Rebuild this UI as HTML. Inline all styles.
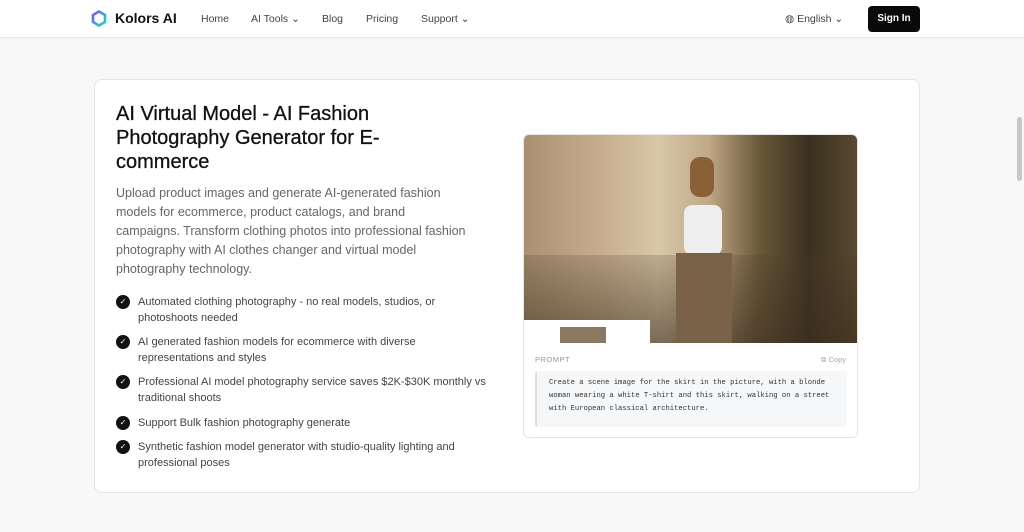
<!DOCTYPE html>
<html><head><meta charset="utf-8"><style>
*{margin:0;padding:0;box-sizing:border-box}
body{width:1024px;height:532px;overflow:hidden;background:#f8f8f8;font-family:"Liberation Sans",sans-serif;position:relative}
.nav{position:absolute;left:0;top:0;width:1024px;height:38px;background:#fff;border-bottom:1px solid #e8e8e8}
.nav span{position:absolute;top:13px;font-size:10.5px;color:#444}
.card{position:absolute;left:94px;top:79px;width:826px;height:414px;background:#fff;border:1px solid #e5e5e5;border-radius:8px}
h1{position:absolute;left:116px;top:102px;width:330px;font-size:20px;line-height:24px;font-weight:500;color:#111;-webkit-text-stroke:.3px #111}
.desc{position:absolute;left:116px;top:184px;width:350px;font-size:12.5px;line-height:19px;color:#666}
.li{position:absolute;left:116px;width:374px;font-size:11px;line-height:16px;color:#444;padding-left:22px}
.li:before{content:"✓";position:absolute;left:0;top:1px;width:14px;height:14px;border-radius:50%;background:#111;color:#fff;font-size:8px;line-height:14px;text-align:center}
.ic{position:absolute;left:523px;top:134px;width:335px;height:304px;border:1px solid #e5e5e5;border-radius:6px;background:#fff;overflow:hidden}
</style></head><body>
<div class="nav">
<svg style="position:absolute;left:91px;top:10px" width="16" height="17" viewBox="0 0 16 17"><defs><linearGradient id="g" x1="0" y1="0" x2="1" y2="1"><stop offset="0" stop-color="#8a4df0"/><stop offset=".5" stop-color="#3aa0f0"/><stop offset="1" stop-color="#33d0a0"/></linearGradient></defs><polygon points="8,1.5 14,5 14,12 8,15.5 2,12 2,5" fill="none" stroke="url(#g)" stroke-width="2.6"/></svg>
<span style="left:115px;top:10px;font-size:14px;font-weight:bold;color:#111">Kolors AI</span>
<span style="left:201px">Home</span>
<span style="left:251px">AI Tools ⌄</span>
<span style="left:322px">Blog</span>
<span style="left:366px">Pricing</span>
<span style="left:421px">Support ⌄</span>
<span style="left:785px">◍ English ⌄</span>
<div style="position:absolute;left:868px;top:6px;width:52px;height:26px;background:#0a0a0a;border-radius:4px;color:#fff;font-size:10px;font-weight:bold;text-align:center;line-height:26px">Sign In</div>
</div>
<div class="card"></div>
<h1>AI Virtual Model - AI Fashion Photography Generator for E-commerce</h1>
<div class="desc">Upload product images and generate AI-generated fashion models for ecommerce, product catalogs, and brand campaigns. Transform clothing photos into professional fashion photography with AI clothes changer and virtual model photography technology.</div>
<div class="li" style="top:294px">Automated clothing photography - no real models, studios, or photoshoots needed</div>
<div class="li" style="top:334px">AI generated fashion models for ecommerce with diverse representations and styles</div>
<div class="li" style="top:374px">Professional AI model photography service saves $2K-$30K monthly vs traditional shoots</div>
<div class="li" style="top:415px">Support Bulk fashion photography generate</div>
<div class="li" style="top:439px">Synthetic fashion model generator with studio-quality lighting and professional poses</div>
<div class="ic">
<div style="position:absolute;left:0;top:0;width:335px;height:208px;background:linear-gradient(90deg,#a89070 0%,#c8b090 25%,#d8c8a8 40%,#c0a888 55%,#6a5a3a 70%,#3a3020 85%,#5a4a30 100%)"></div>
<div style="position:absolute;left:0;top:120px;width:335px;height:88px;background:linear-gradient(180deg,rgba(80,60,40,.2),rgba(60,45,30,.6))"></div>
<div style="position:absolute;left:160px;top:70px;width:38px;height:50px;background:#eee;border-radius:8px"></div>
<div style="position:absolute;left:166px;top:22px;width:24px;height:40px;background:#8a6038;border-radius:10px"></div>
<div style="position:absolute;left:152px;top:118px;width:56px;height:90px;background:#7a6248"></div>
<div style="position:absolute;left:0;top:185px;width:126px;height:23px;background:#fff"></div>
<div style="position:absolute;left:36px;top:192px;width:46px;height:16px;background:#8a7860"></div>
<div style="position:absolute;left:11px;top:220px;font-size:7.5px;color:#999;letter-spacing:.5px">PROMPT</div>
<div style="position:absolute;right:11px;top:220px;font-size:7.5px;color:#aaa">⧉ Copy</div>
<div style="position:absolute;left:11px;top:236px;width:312px;height:56px;background:#f6f7f9;border-left:2px solid #ddd;border-radius:3px;padding:6px 12px;font-family:'Liberation Mono',monospace;font-size:7.2px;line-height:13px;color:#333">Create a scene image for the skirt in the picture, with a blonde woman wearing a white T-shirt and this skirt, walking on a street with European classical architecture.</div>
</div>
<div style="position:absolute;right:2px;top:117px;width:5px;height:64px;background:#c8c8c8;border-radius:3px"></div>
</body></html>
